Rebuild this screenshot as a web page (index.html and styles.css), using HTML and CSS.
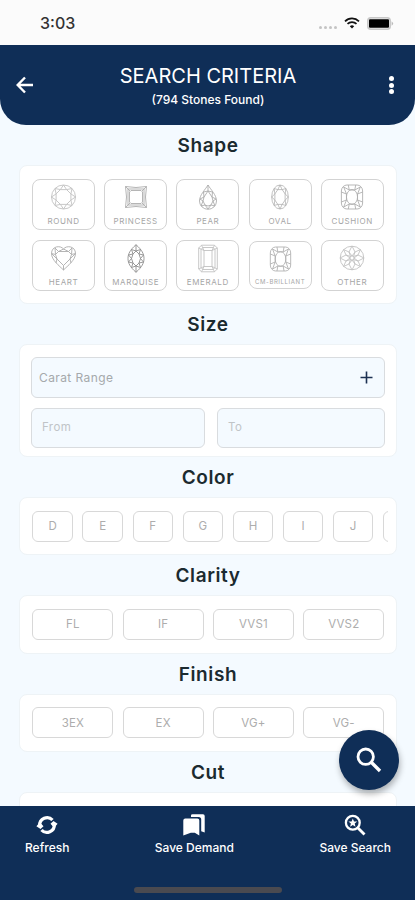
FILE: index.html
```html
<!DOCTYPE html>
<html lang="en">
<head>
  <meta charset="UTF-8">
  <meta name="viewport" content="width=device-width, initial-scale=1.0">
  <title>Search Criteria</title>
  <link rel="stylesheet" href="styles.css">
</head>
<body>
  <div class="status-bar">
    <span class="time">3:03</span>
    <div class="status-icons">
      <div class="signal"><i></i><i></i><i></i><i></i></div>
      <svg class="wifi" viewBox="0 0 16 12" width="16" height="12">
        <path d="M1 4.3a10 10 0 0 1 14 0M3.5 6.9a6.4 6.4 0 0 1 9 0" fill="none" stroke="#111" stroke-width="1.7"/>
        <path d="M5.8 9.2a3.2 3.2 0 0 1 4.400 0L8 11.6z" fill="#111"/>
      </svg>
      <svg class="battery" viewBox="0 0 27 13" width="27" height="13">
        <rect x=".8" y=".8" width="22.400" height="11.400" rx="3" fill="#eee" stroke="#c8c8c8" stroke-width="1.600"/>
        <rect x="2" y="2.300" width="20" height="8.400" rx="1" fill="#000"/>
        <path d="M24.6 4.2q3 2.3 0 4.6z" fill="#bbb"/>
      </svg>
    </div>
  </div>

  <header class="header">
    <svg class="back" viewBox="0 0 18 18" width="18" height="18">
      <path d="M17 9H2M9 1.5L1.7 9L9 16.5" fill="none" stroke="#fff" stroke-width="2.4"/>
    </svg>
    <div class="header-text">
      <h1>SEARCH CRITERIA</h1>
      <p>(794 Stones Found)</p>
    </div>
    <div class="menu"><i></i><i></i><i></i></div>
  </header>

  <main class="content">
    <h2>Shape</h2>
    <div class="card shape-grid">
      <div class="shape">
        <svg viewBox="0 0 26 26" width="27" height="26"><use href="#round-cut"/></svg>
        <span>ROUND</span>
      </div>
      <div class="shape dark">
        <svg viewBox="0 0 26 26" width="26" height="26">
          <path d="M2.500 2.500Q13 4.500 23.500 2.500Q21.500 13 23.500 23.500Q13 21.500 2.500 23.500Q4.500 13 2.500 2.500zM5 5h16v16H5zM8 6.500h10l1.500 1.500v10L18 19.500H8L6.500 18V8zM2.500 2.500l4.500 4.500M23.500 2.500L19 7M2.500 23.500L7 19M23.500 23.500L19 19"/>
        </svg>
        <span>PRINCESS</span>
      </div>
      <div class="shape dark">
        <svg viewBox="0 0 26 26" width="26" height="26">
          <path d="M13 1C10 6 4.500 11 4.500 17a8.500 8.300 0 0 0 17 0C21.500 11 16 6 13 1z"/>
          <path d="M13 7l-4 6-1 4 2 4 3 1 3-1 2-4-1-4zM13 1v6M8.500 8l.5 5-4 2 3 2-2 5 4-1 3 4 3-4 4 1-2-5 3-2-4-2 .5-5L13 7 8.500 8"/>
        </svg>
        <span>PEAR</span>
      </div>
      <div class="shape dark">
        <svg viewBox="0 0 26 26" width="18" height="26" preserveAspectRatio="none"><use href="#round-cut"/></svg>
        <span>OVAL</span>
      </div>
      <div class="shape dark">
        <svg viewBox="0 0 26 26" width="24" height="26" preserveAspectRatio="none"><use href="#cushion-cut"/></svg>
        <span>CUSHION</span>
      </div>
      <div class="shape dark">
        <svg viewBox="0 0 26 26" width="27" height="26">
          <path d="M13 25C9 21 1 15 1 8.500 1 1 10 0 13 4c3-4 12-3 12 4.500C25 15 17 21 13 25z"/>
          <path d="M13 20.500L6.500 14 5 9.500 8 6.500h10l3 3-1.500 4.500zM13 4L8 6.500 4.500 3 5 9.500 1 8.500 6.500 14l-1 4M13 4l5 2.500L21.500 3 21 9.500l4-1-5.500 5.500 1 4M13 20.500V25"/>
        </svg>
        <span>HEART</span>
      </div>
      <div class="shape darker">
        <svg class="tall" viewBox="0 0 18 29" width="18" height="29">
          <path d="M9 .7C3 6 1 10 1 14.500S3 23 9 28.300C15 23 17 19 17 14.500S15 6 9 .7z"/>
          <path d="M9 7l-3 3-1.500 4.500L6 19l3 3 3-3 1.500-4.500L12 10zM9 .7V7L4.500 5.500 6 10l-4.500 1 3 3.500-3 3.500L6 19l-1.500 4.500L9 22v6.300M9 7l4.500-1.500L12 10l4.500 1-3 3.500 3 3.500L12 19l1.500 4.500L9 22"/>
        </svg>
        <span>MARQUISE</span>
      </div>
      <div class="shape">
        <svg class="tall" viewBox="0 0 20 28" width="20" height="29">
          <path d="M3.500.7h13l2.800 2.800v21l-2.800 2.800h-13L.7 24.500v-21zM5 3h10l2 2v18l-2 2H5l-2-2V5zM6 6h8v16H6zM.7 3.500L6 6 3.500.7M16.500.7L14 6l5.300-2.500M.7 24.500L6 22l-2.500 5.300M16.500 27.300L14 22l5.300 2.500"/>
        </svg>
        <span>EMERALD</span>
      </div>
      <div class="shape dark small">
        <svg viewBox="0 0 26 26" width="23" height="26" preserveAspectRatio="none"><use href="#cushion-cut"/></svg>
        <span>CM-BRILLIANT</span>
      </div>
      <div class="shape">
        <svg viewBox="0 0 26 26" width="26" height="26">
          <circle cx="13" cy="13" r="11.800"/>
          <circle cx="13" cy="13" r="2"/>
          <path d="M13 1l3 6-3 4-3-4zM13 25l3-6-3-4-3 4zM1 13l6-3 4 3-4 3zM25 13l-6-3-4 3 4 3zM4.500 4.500L10 7l1.500 4.500L7 10zM21.500 4.500L16 7l-1.500 4.500L19 10zM4.500 21.500L10 19l1.500-4.500L7 16zM21.500 21.500L16 19l-1.500-4.500L19 16z"/>
        </svg>
        <span>OTHER</span>
      </div>
    </div>

    <h2>Size</h2>
    <div class="card size-card">
      <div class="field carat">
        <span>Carat Range</span>
        <svg viewBox="0 0 13 13" width="13" height="13"><path d="M6.500 .5v12M.5 6.500h12" stroke="#1c3152" stroke-width="1.600"/></svg>
      </div>
      <div class="field light from">From</div>
      <div class="field light to">To</div>
    </div>

    <h2>Color</h2>
    <div class="card">
      <div class="chips colors">
        <div class="chip">D</div>
        <div class="chip">E</div>
        <div class="chip">F</div>
        <div class="chip">G</div>
        <div class="chip">H</div>
        <div class="chip">I</div>
        <div class="chip">J</div>
        <div class="chip"></div>
      </div>
    </div>

    <h2>Clarity</h2>
    <div class="card">
      <div class="chips">
        <div class="chip">FL</div>
        <div class="chip">IF</div>
        <div class="chip">VVS1</div>
        <div class="chip">VVS2</div>
      </div>
    </div>

    <h2>Finish</h2>
    <div class="card">
      <div class="chips">
        <div class="chip">3EX</div>
        <div class="chip">EX</div>
        <div class="chip">VG+</div>
        <div class="chip">VG-</div>
      </div>
    </div>

    <h2>Cut</h2>
    <div class="card"></div>
  </main>

  <div class="fab">
    <svg viewBox="0 0 26 26" width="26" height="26">
      <circle cx="9.700" cy="9.700" r="7.700" fill="none" stroke="#fff" stroke-width="2.800"/>
      <path d="M15 15l9 9" stroke="#fff" stroke-width="3.400"/>
    </svg>
  </div>

  <footer class="bottom-bar">
    <div class="tab">
      <svg viewBox="0 0 22 22" width="22" height="22">
        <path d="M3.700 11.500A7.400 7.400 0 0 1 16.500 6M18.300 10.500A7.400 7.400 0 0 1 5.500 16" fill="none" stroke="#fff" stroke-width="3.200"/>
        <path d="M.4 12.300L3.900 8.300l3.600 4L4.500 15zM21.600 9.700l-3.500 4-3.600-4 3-2.700z" fill="#fff"/>
      </svg>
      <span>Refresh</span>
    </div>
    <div class="tab">
      <svg viewBox="0 0 22 22" width="22" height="22">
        <path d="M8 3V1.500Q8 .3 9.500 .3H20q1.700 0 1.700 1.700v16.500l-3.500-1.200V5.500Q18.200 3 15.700 3z" fill="#fff"/>
        <path d="M.3 21.500V6.500Q.3 4.500 2.300 4.500h12q2 0 2 2v15l-4.500-2.800h-4z" fill="#fff"/>
      </svg>
      <span>Save Demand</span>
    </div>
    <div class="tab">
      <svg viewBox="0 0 22 22" width="22" height="22">
        <circle cx="8.800" cy="8.800" r="6.900" fill="none" stroke="#fff" stroke-width="2.300"/>
        <path d="M13.500 13.500l7 7" stroke="#fff" stroke-width="2.800"/>
        <path d="M8.800 4.400l1.200 3 3.200.2-2.500 2 .8 3.200-2.700-1.700-2.700 1.700.8-3.200-2.500-2 3.200-.2z" fill="#fff"/>
      </svg>
      <span>Save Search</span>
    </div>
    <div class="home-line"></div>
  </footer>

  <!-- shared gem outlines -->
  <svg class="defs" width="0" height="0">
    <symbol id="round-cut" viewBox="0 0 26 26" preserveAspectRatio="none">
      <circle cx="13" cy="13" r="12"/>
      <path d="M20.400 16.100L16.100 20.400H9.900L5.600 16.100V9.900L9.900 5.600h6.200l4.300 4.300z"/>
      <path d="M25 13l-4.600 3.100 1.100 5.400-5.400-1.100L13 25l-3.100-4.600-5.400 1.100 1.100-5.400L1 13l4.600-3.100-1.100-5.400 5.400 1.100L13 1l3.100 4.600 5.400-1.100-1.100 5.400z"/>
    </symbol>
    <symbol id="cushion-cut" viewBox="0 0 26 26" preserveAspectRatio="none">
      <rect x="1.500" y="1" width="23" height="24" rx="6"/>
      <ellipse cx="13" cy="13" rx="6" ry="7.500"/>
      <path d="M4 3l6 3h6l6-3-3 7v6l3 7-6-3h-6l-6 3 3-7v-6zM1.500 8L7 10M1.500 18L7 16M24.500 8L19 10M24.500 18L19 16M9 1l1 5M17 1l-1 5M9 25l1-5M17 25l-1-5"/>
    </symbol>
  </svg>
</body>
</html>
```

FILE: styles.css
```css
* {
  box-sizing: border-box;
}
body {
  margin: 0;
  height: 900px;
  overflow: hidden;
  display: flex;
  flex-direction: column;
  position: relative;
  background: #f4faff;
  font-family: Inter, "Liberation Sans", sans-serif;
}
h1, h2, p {
  margin: 0;
}
.status-bar {
  height: 45px;
  flex: none;
  display: flex;
  justify-content: space-between;
  align-items: center;
  padding: 1px 21px 0 40px;
  background: #fbfbfb;
}
.time {
  font-size: 16px;
  font-weight: 500;
  color: #333;
}
.status-icons {
  display: flex;
  align-items: center;
  gap: 7px;
}
.signal {
  display: flex;
  gap: 2px;
  padding-top: 8px;
}
.signal i {
  width: 3px;
  height: 3px;
  border-radius: 50%;
  background: #c4c4c4;
}
.header {
  height: 80px;
  flex: none;
  display: flex;
  justify-content: space-between;
  align-items: center;
  padding: 0 21px 0 16px;
  background: #0f2e57;
  border-radius: 0 0 26px 26px;
  color: #fff;
}
.header-text {
  text-align: center;
  padding: 2px 7px 0 0;
}
h1 {
  font-size: 20px;
  line-height: 24px;
  font-weight: 400;
}
.header p {
  font-size: 12px;
  line-height: 16px;
  margin-top: 4px;
  font-weight: 500;
}
.menu {
  display: flex;
  flex-direction: column;
  gap: 1.500px;
}
.menu i {
  width: 5px;
  height: 5px;
  border-radius: 50%;
  background: #fff;
}
.content {
  flex: 1;
  min-height: 0;
  overflow: hidden;
  padding: 0 18px 0 19px;
}
h2 {
  height: 40px;
  line-height: 42px;
  text-align: center;
  font-size: 19px;
  font-weight: 600;
  letter-spacing: 0.6px;
  color: #1b2a2f;
}
.card {
  min-height: 58.300px;
  padding: 12.500px 9px 12.500px 12.400px;
  background: #fff;
  border: 1px solid #eef3f6;
  border-radius: 8px;
}
.shape-grid {
  height: 139px;
  display: grid;
  grid-template-columns: repeat(5, 63px);
  grid-auto-rows: 51px;
  gap: 10px 9.200px;
  padding-left: 12px;
}
.shape {
  display: flex;
  flex-direction: column;
  align-items: center;
  padding-top: 4px;
  border: 1px solid #d3d3d3;
  border-radius: 8px;
  color: #a6a6a6;
  font-size: 8px;
  line-height: 10px;
  letter-spacing: 0.6px;
}
.shape svg {
  fill: none;
  stroke: #c2c2c2;
  stroke-width: 0.9;
  margin-bottom: 6px;
}
.shape.dark svg {
  stroke: #adadad;
}
.shape.darker svg {
  stroke: #8f8f8f;
}
.shape svg.tall {
  margin: -1px 0 4px;
}
.shape.small {
  height: 48px;
  margin-top: 1px;
  font-size: 6px;
}
.shape.small svg {
  margin-bottom: 5px;
}
.size-card {
  height: 113px;
  display: grid;
  grid-template-columns: 174px 168px;
  grid-template-rows: 41px 40px;
  gap: 10px 12px;
  padding: 12px 11px;
}
.field {
  display: flex;
  align-items: center;
  border: 1px solid #d9dcdf;
  border-radius: 6px;
  background: #f4faff;
  font-size: 12px;
  letter-spacing: 0.4px;
  color: #a5a9ac;
}
.carat {
  grid-column: 1 / 3;
  justify-content: space-between;
  padding: 0 11px 0 7px;
}
.light {
  padding: 0 10px 2px;
  font-size: 11.500px;
  color: #c0c4c7;
}
.chips {
  display: grid;
  grid-template-columns: repeat(4, 81px);
  gap: 9.300px;
  overflow: hidden;
}
.colors {
  grid-template-columns: repeat(8, 40.500px);
  gap: 9.600px;
  width: 356px;
}
.chip {
  height: 31px;
  display: flex;
  align-items: center;
  justify-content: center;
  border: 1px solid #d8d8d8;
  border-radius: 6px;
  font-size: 11.500px;
  letter-spacing: 0.2px;
  color: #adadad;
}
.fab {
  position: absolute;
  left: 339px;
  top: 730px;
  width: 60px;
  height: 60px;
  border-radius: 50%;
  display: flex;
  align-items: center;
  justify-content: center;
  background: #0f2e57;
  box-shadow: 1px 4px 6px rgba(0, 0, 0, 0.3);
}
.bottom-bar {
  position: relative;
  height: 94px;
  flex: none;
  display: flex;
  justify-content: space-between;
  padding: 8px 24px 0 25px;
  background: #0f2e57;
}
.tab {
  display: flex;
  flex-direction: column;
  align-items: center;
  color: #fff;
  font-size: 12px;
  line-height: 16px;
  font-weight: 500;
}
.tab svg {
  margin-bottom: 4px;
}
.home-line {
  position: absolute;
  left: 134px;
  bottom: 7px;
  width: 148px;
  height: 6px;
  border-radius: 3px;
  background: #4a4a50;
}
.defs {
  position: absolute;
}
```
